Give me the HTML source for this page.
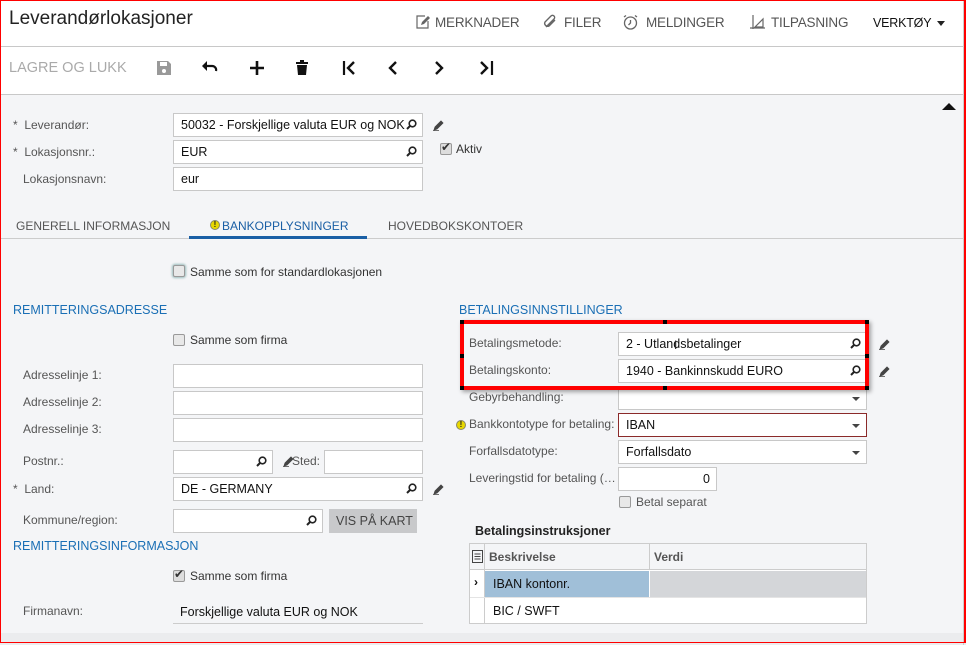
<!DOCTYPE html>
<html><head><meta charset="utf-8"><style>
*{box-sizing:border-box;margin:0;padding:0}
body{width:966px;height:645px;overflow:hidden;background:#f4f5f7;font-family:"Liberation Sans",sans-serif;position:relative;color:#333}
.a{position:absolute}
.hdr{left:0;top:0;width:966px;height:95px;background:#fff}
.lbl{font-size:12px;color:#555;white-space:nowrap}
.inp{position:absolute;background:#fff;border:1px solid #c8c8c8;height:24px;font-size:12.5px;color:#111;padding:4px 0 0 7px;white-space:nowrap;overflow:hidden}
.mag{position:absolute;right:5px;top:5px;width:11px;height:11px}
.dd{position:absolute;right:6px;top:10px;border-left:4px solid transparent;border-right:4px solid transparent;border-top:4px solid #444}
.sec{font-size:12.5px;color:#1a6fb5}
.cb{position:absolute;width:12px;height:12px;border:1px solid #999;border-radius:2px;background:#e8e8e8}
.pen{position:absolute;width:12px;height:12px}
.tb{font-size:13.5px;color:#555;letter-spacing:-.2px}
</style></head><body>
<div class="a hdr"></div>
<div class="a" style="left:0;top:46px;width:966px;height:1px;background:#c8c8c8"></div>
<div class="a" style="left:0;top:94px;width:966px;height:1px;background:#c8c8c8"></div>
<div class="a" style="left:9px;top:8px;font-size:19px;color:#222">Leverandørlokasjoner</div>

<svg class="a" style="left:415px;top:14px" width="16" height="16" viewBox="0 0 16 16"><path d="M10 2H2v12h11V7" fill="none" stroke="#666" stroke-width="1.2"/><path d="M6 11l1-3 6-6 2 2-6 6z" fill="#666"/></svg>
<div class="a tb" style="left:435px;top:15px">MERKNADER</div>
<svg class="a" style="left:542px;top:14px" width="16" height="16" viewBox="0 0 16 16"><path d="M4 13L12 5a2 2 0 0 0-3-3L3 8a3 3 0 0 0 4 4l6-6" fill="none" stroke="#666" stroke-width="1.4"/></svg>
<div class="a tb" style="left:564px;top:15px">FILER</div>
<svg class="a" style="left:622px;top:14px" width="17" height="17" viewBox="0 0 17 17"><circle cx="8.5" cy="9" r="6" fill="none" stroke="#666" stroke-width="1.3"/><path d="M8.5 6v3l-2 2M2 3l2-1.5M15 3l-2-1.5" fill="none" stroke="#666" stroke-width="1.3"/></svg>
<div class="a tb" style="left:646px;top:15px">MELDINGER</div>
<svg class="a" style="left:749px;top:13px" width="17" height="17" viewBox="0 0 17 17"><path d="M4 2v14M1 15h15M6 14L14 6v8z" fill="none" stroke="#666" stroke-width="1.2"/></svg>
<div class="a tb" style="left:771px;top:15px">TILPASNING</div>
<div class="a" style="left:873px;top:16px;font-size:12.5px;color:#111;letter-spacing:-.2px">VERKTØY</div>
<div class="a" style="left:937px;top:21px;border-left:4px solid transparent;border-right:4px solid transparent;border-top:5px solid #222"></div>

<div class="a" style="left:9px;top:60px;font-size:14.5px;color:#aaa">LAGRE OG LUKK</div>
<svg class="a" style="left:157px;top:61px" width="14" height="14" viewBox="0 0 14 14"><path d="M0 0h11l3 3v11H0z" fill="#999"/><rect x="3" y="1" width="7" height="4" fill="#fff"/><circle cx="7" cy="10" r="2" fill="#fff"/></svg>
<svg class="a" style="left:202px;top:61px" width="16" height="12" viewBox="0 0 16 12"><path d="M4 5h6a4 4 0 0 1 4 5" fill="none" stroke="#111" stroke-width="2.2"/><path d="M0 5l5-5v10z" fill="#111"/></svg>
<svg class="a" style="left:250px;top:61px" width="14" height="14" viewBox="0 0 14 14"><path d="M7 0v14M0 7h14" stroke="#111" stroke-width="2.6"/></svg>
<svg class="a" style="left:296px;top:60px" width="12" height="15" viewBox="0 0 12 15"><rect x="0" y="2" width="12" height="2" fill="#111"/><rect x="4" y="0" width="4" height="2" fill="#111"/><path d="M1 5h10l-1 10H2z" fill="#111"/></svg>
<svg class="a" style="left:342px;top:61px" width="14" height="14" viewBox="0 0 14 14"><path d="M2 0v14" stroke="#111" stroke-width="2.2"/><path d="M12 1L6 7l6 6" fill="none" stroke="#111" stroke-width="2.4"/></svg>
<svg class="a" style="left:388px;top:61px" width="10" height="14" viewBox="0 0 10 14"><path d="M8 1L2 7l6 6" fill="none" stroke="#111" stroke-width="2.4"/></svg>
<svg class="a" style="left:434px;top:61px" width="10" height="14" viewBox="0 0 10 14"><path d="M2 1l6 6-6 6" fill="none" stroke="#111" stroke-width="2.4"/></svg>
<svg class="a" style="left:480px;top:61px" width="14" height="14" viewBox="0 0 14 14"><path d="M1 1l6 6-6 6" fill="none" stroke="#111" stroke-width="2.4"/><path d="M12 0v14" stroke="#111" stroke-width="2.2"/></svg>

<div class="a" style="left:942px;top:103px;border-left:7px solid transparent;border-right:7px solid transparent;border-bottom:7px solid #111"></div>

<!-- top form -->
<div class="a lbl" style="left:13px;top:118px">*&nbsp; Leverandør:</div>
<div class="a lbl" style="left:13px;top:145px">*&nbsp; Lokasjonsnr.:</div>
<div class="a lbl" style="left:23px;top:172px">Lokasjonsnavn:</div>
<div class="inp" style="left:173px;top:113px;width:250px">50032 - Forskjellige valuta EUR og NOK<svg class="mag" viewBox="0 0 11 11"><circle cx="6.5" cy="4.5" r="3.3" fill="none" stroke="#222" stroke-width="1.6"/><path d="M4 7L1 10" stroke="#222" stroke-width="2"/></svg></div>
<div class="inp" style="left:173px;top:140px;width:250px">EUR<svg class="mag" viewBox="0 0 11 11"><circle cx="6.5" cy="4.5" r="3.3" fill="none" stroke="#222" stroke-width="1.6"/><path d="M4 7L1 10" stroke="#222" stroke-width="2"/></svg></div>
<div class="inp" style="left:173px;top:167px;width:250px">eur</div>
<svg class="pen" style="left:433px;top:119px" viewBox="0 0 12 12"><path d="M1 11l1-3 6-6 2 2-6 6zM0 11.5h6" fill="#444" stroke="#444" stroke-width=".8"/></svg>
<div class="cb" style="left:440px;top:143px;background:#ddd"></div><div class="a" style="left:441px;top:140px;font-size:12px;color:#333">✔</div>
<div class="a lbl" style="left:456px;top:142px;color:#333">Aktiv</div>

<div class="a" style="left:16px;top:219px;font-size:12px;color:#555">GENERELL INFORMASJON</div>
<div class="a" style="left:210px;top:220px;width:10px;height:10px;border-radius:50%;background:#e8d800;border:1px solid #886;font-size:8px;line-height:8px;text-align:center;font-weight:bold;color:#222">!</div>
<div class="a" style="left:222px;top:219px;font-size:12px;color:#1a5fa5">BANKOPPLYSNINGER</div>
<div class="a" style="left:388px;top:219px;font-size:12px;color:#555">HOVEDBOKSKONTOER</div>
<div class="a" style="left:0;top:238px;width:966px;height:1px;background:#ccc"></div>
<div class="a" style="left:189px;top:236px;width:178px;height:3px;background:#1a5fa5"></div>

<div class="cb" style="left:173px;top:265px;box-shadow:0 0 2px 1px #9bb"></div>
<div class="a lbl" style="left:190px;top:265px;color:#333">Samme som for standardlokasjonen</div>

<!-- left -->
<div class="a sec" style="left:13px;top:303px">REMITTERINGSADRESSE</div>
<div class="cb" style="left:173px;top:334px"></div>
<div class="a lbl" style="left:190px;top:333px;color:#333">Samme som firma</div>
<div class="a lbl" style="left:23px;top:368px">Adresselinje 1:</div>
<div class="a lbl" style="left:23px;top:395px">Adresselinje 2:</div>
<div class="a lbl" style="left:23px;top:422px">Adresselinje 3:</div>
<div class="a lbl" style="left:23px;top:454px">Postnr.:</div>
<div class="a lbl" style="left:13px;top:482px">*&nbsp; Land:</div>
<div class="a lbl" style="left:23px;top:513px">Kommune/region:</div>
<div class="inp" style="left:173px;top:364px;width:250px"></div>
<div class="inp" style="left:173px;top:391px;width:250px"></div>
<div class="inp" style="left:173px;top:418px;width:250px"></div>
<div class="inp" style="left:173px;top:450px;width:100px"><svg class="mag" viewBox="0 0 11 11"><circle cx="6.5" cy="4.5" r="3.3" fill="none" stroke="#222" stroke-width="1.6"/><path d="M4 7L1 10" stroke="#222" stroke-width="2"/></svg></div>
<svg class="pen" style="left:283px;top:455px" viewBox="0 0 12 12"><path d="M1 11l1-3 6-6 2 2-6 6zM0 11.5h6" fill="#444" stroke="#444" stroke-width=".8"/></svg>
<div class="a lbl" style="left:292px;top:454px">Sted:</div>
<div class="inp" style="left:324px;top:450px;width:99px"></div>
<div class="inp" style="left:173px;top:477px;width:250px">DE - GERMANY<svg class="mag" viewBox="0 0 11 11"><circle cx="6.5" cy="4.5" r="3.3" fill="none" stroke="#222" stroke-width="1.6"/><path d="M4 7L1 10" stroke="#222" stroke-width="2"/></svg></div>
<svg class="pen" style="left:433px;top:483px" viewBox="0 0 12 12"><path d="M1 11l1-3 6-6 2 2-6 6zM0 11.5h6" fill="#444" stroke="#444" stroke-width=".8"/></svg>
<div class="inp" style="left:173px;top:509px;width:150px"><svg class="mag" viewBox="0 0 11 11"><circle cx="6.5" cy="4.5" r="3.3" fill="none" stroke="#222" stroke-width="1.6"/><path d="M4 7L1 10" stroke="#222" stroke-width="2"/></svg></div>
<div class="a" style="left:329px;top:509px;width:88px;height:24px;background:#c8c9cb;font-size:12.5px;color:#444;padding:5px 0 0 7px;white-space:nowrap">VIS PÅ KART</div>
<div class="a sec" style="left:13px;top:539px">REMITTERINGSINFORMASJON</div>
<div class="cb" style="left:173px;top:570px;background:#ddd"></div><div class="a" style="left:174px;top:567px;font-size:12px;color:#333">✔</div>
<div class="a lbl" style="left:190px;top:569px;color:#333">Samme som firma</div>
<div class="a lbl" style="left:23px;top:604px">Firmanavn:</div>
<div class="a" style="left:180px;top:605px;font-size:12.5px;color:#111">Forskjellige valuta EUR og NOK</div>
<div class="a" style="left:173px;top:623px;width:250px;height:1px;background:#ccc"></div>

<!-- right -->
<div class="a sec" style="left:459px;top:303px">BETALINGSINNSTILLINGER</div>
<div class="a lbl" style="left:469px;top:336px">Betalingsmetode:</div>
<div class="a lbl" style="left:469px;top:363px">Betalingskonto:</div>
<div class="a lbl" style="left:469px;top:390px">Gebyrbehandling:</div>
<div class="a" style="left:456px;top:420px;width:10px;height:10px;border-radius:50%;background:#e8d800;border:1px solid #886;font-size:8px;line-height:8px;text-align:center;font-weight:bold;color:#222">!</div>
<div class="a lbl" style="left:469px;top:417px">Bankkontotype for betaling:</div>
<div class="a lbl" style="left:469px;top:444px">Forfallsdatotype:</div>
<div class="a lbl" style="left:469px;top:471px">Leveringstid for betaling (…</div>
<div class="inp" style="left:618px;top:332px;width:249px">2 - Utlandsbetalinger<svg class="mag" viewBox="0 0 11 11"><circle cx="6.5" cy="4.5" r="3.3" fill="none" stroke="#222" stroke-width="1.6"/><path d="M4 7L1 10" stroke="#222" stroke-width="2"/></svg></div>
<div class="inp" style="left:618px;top:359px;width:249px">1940 - Bankinnskudd EURO<svg class="mag" viewBox="0 0 11 11"><circle cx="6.5" cy="4.5" r="3.3" fill="none" stroke="#222" stroke-width="1.6"/><path d="M4 7L1 10" stroke="#222" stroke-width="2"/></svg></div>
<div class="inp" style="left:618px;top:386px;width:249px"><span class="dd"></span></div>
<div class="inp" style="left:618px;top:413px;width:249px;border-color:#8b2a2a">IBAN<span class="dd"></span></div>
<div class="inp" style="left:618px;top:440px;width:249px">Forfallsdato<span class="dd"></span></div>
<div class="inp" style="left:618px;top:467px;width:99px;text-align:right;padding-right:6px">0</div>
<svg class="pen" style="left:879px;top:338px" viewBox="0 0 12 12"><path d="M1 11l1-3 6-6 2 2-6 6zM0 11.5h6" fill="#444" stroke="#444" stroke-width=".8"/></svg>
<svg class="pen" style="left:879px;top:365px" viewBox="0 0 12 12"><path d="M1 11l1-3 6-6 2 2-6 6zM0 11.5h6" fill="#444" stroke="#444" stroke-width=".8"/></svg>
<div class="a" style="left:460px;top:320px;width:409px;height:70px;border:4px solid #f00;box-shadow:2px 2px 4px rgba(0,0,0,.35)"></div>
<div class="a" style="left:460px;top:320px;width:4px;height:4px;background:#000"></div>
<div class="a" style="left:663px;top:320px;width:4px;height:4px;background:#000"></div>
<div class="a" style="left:865px;top:320px;width:4px;height:4px;background:#000"></div>
<div class="a" style="left:460px;top:354px;width:4px;height:4px;background:#000"></div>
<div class="a" style="left:865px;top:354px;width:4px;height:4px;background:#000"></div>
<div class="a" style="left:460px;top:386px;width:4px;height:4px;background:#000"></div>
<div class="a" style="left:663px;top:386px;width:4px;height:4px;background:#000"></div>
<div class="a" style="left:865px;top:386px;width:4px;height:4px;background:#000"></div>
<div class="a" style="left:674px;top:338px;font-size:12px;color:#222">I</div>

<div class="cb" style="left:619px;top:496px"></div>
<div class="a lbl" style="left:636px;top:495px">Betal separat</div>
<div class="a" style="left:475px;top:524px;font-size:12.5px;font-weight:bold;color:#222">Betalingsinstruksjoner</div>
<div class="a" style="left:469px;top:543px;width:398px;height:81px;border:1px solid #ccc;background:#fff"></div>
<div class="a" style="left:470px;top:544px;width:396px;height:26px;background:#f4f5f7;border-bottom:1px solid #ccc"></div>
<div class="a" style="left:484px;top:544px;width:1px;height:80px;background:#ccc"></div>
<div class="a" style="left:649px;top:544px;width:1px;height:26px;background:#ccc"></div>
<svg class="a" style="left:472px;top:550px" width="11" height="13" viewBox="0 0 11 13"><rect x=".5" y=".5" width="10" height="12" fill="none" stroke="#444"/><path d="M2.5 4h6M2.5 6.5h6M2.5 9h6" stroke="#444"/></svg>
<div class="a" style="left:489px;top:550px;font-size:12px;font-weight:bold;color:#555">Beskrivelse</div>
<div class="a" style="left:654px;top:550px;font-size:12px;font-weight:bold;color:#555">Verdi</div>
<div class="a" style="left:485px;top:571px;width:164px;height:26px;background:#a0bfd8"></div>
<div class="a" style="left:650px;top:571px;width:216px;height:26px;background:#d4d6d9"></div>
<div class="a" style="left:474px;top:575px;font-size:12px;font-weight:bold;color:#111">›</div>
<div class="a" style="left:493px;top:577px;font-size:12.5px;color:#111">IBAN kontonr.</div>
<div class="a" style="left:470px;top:597px;width:396px;height:1px;background:#e4e4e4"></div>
<div class="a" style="left:493px;top:604px;font-size:12.5px;color:#111">BIC / SWFT</div>

<div class="a" style="left:0;top:633px;width:966px;height:12px;background:#ebecee"></div>
<div class="a" style="left:963px;top:0;width:1px;height:645px;background:#ccc"></div>
<div class="a" style="left:0;top:0;width:966px;height:643px;border:1px solid #f00;border-right-width:2px"></div>
</body></html>
